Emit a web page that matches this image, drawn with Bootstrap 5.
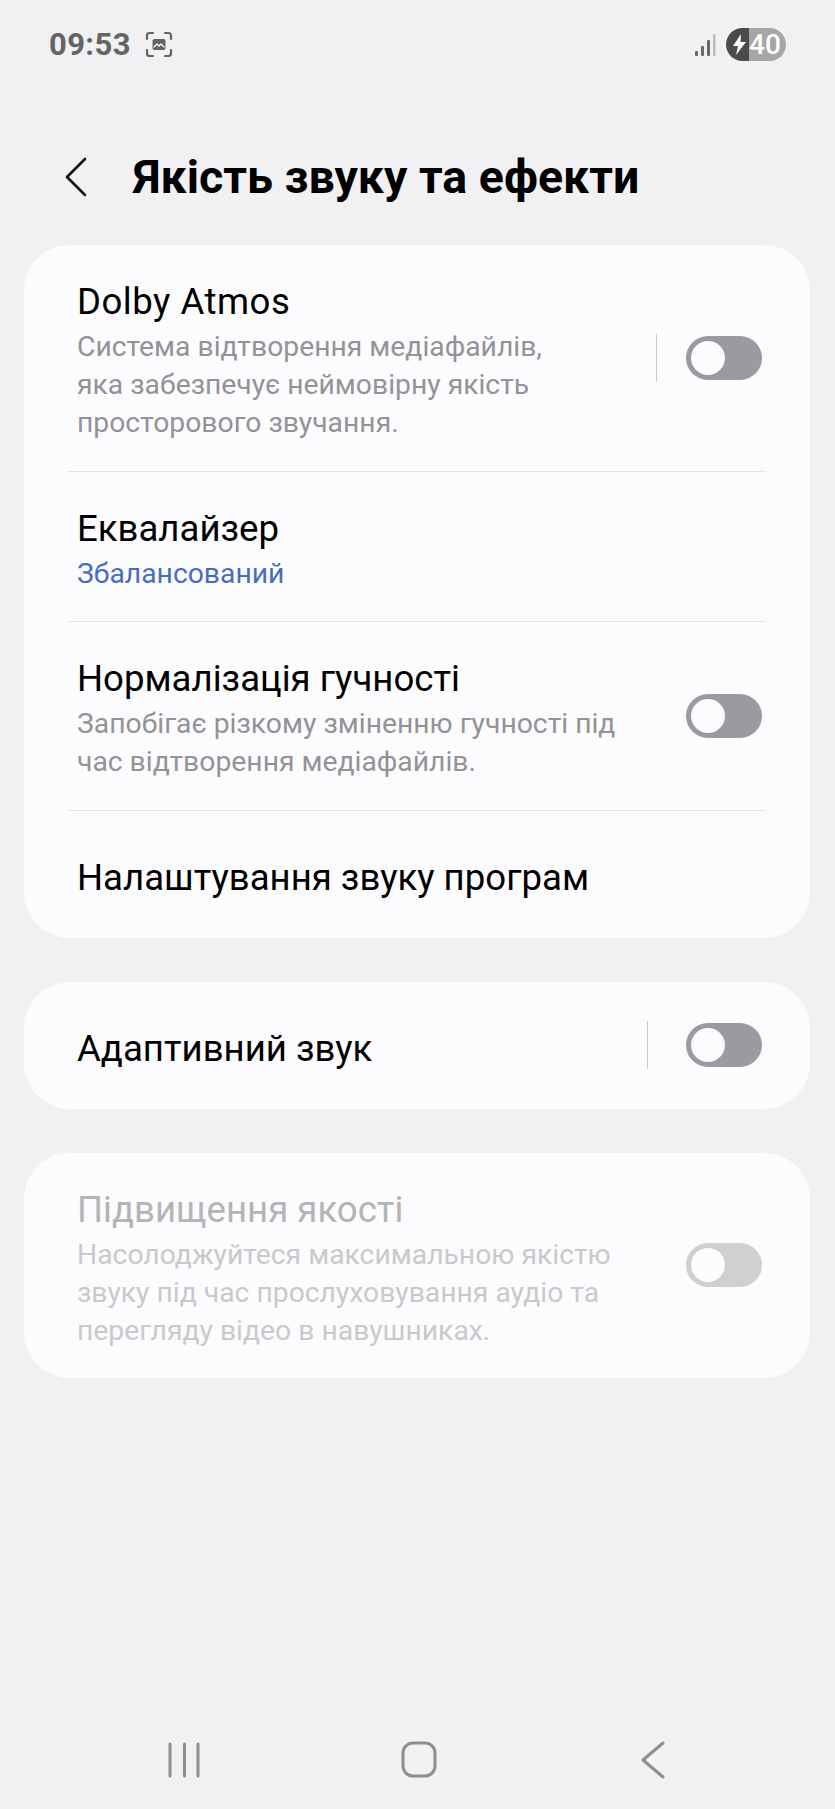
<!DOCTYPE html>
<html lang="uk">
<head>
  <meta charset="UTF-8">
  <meta name="viewport" content="width=device-width, initial-scale=1">
  <title>Якість звуку та ефекти</title>
  <link href="https://cdn.jsdelivr.net/npm/bootstrap@5.3.0/dist/css/bootstrap.min.css" rel="stylesheet">
  <style>
    body { background: #f1f1f3; font-family: Roboto, "Liberation Sans", sans-serif; height: 1809px; overflow: hidden; }
    .status-bar { height: 76px; padding: 28px 49px 0 49px; }
    .status-left { gap: 14px; }
    .status-time { font-size: 31px; line-height: 33px; font-weight: 700; color: #646466; letter-spacing: .4px; }
    .status-right { gap: 10px; }
    .batt { width: 60px; height: 33px; border-radius: 17px; overflow: hidden; color: #fff; }
    .batt-dark { width: 23px; background: #4b4b4d; }
    .batt-light { width: 37px; background: #a6a6a8; font-size: 28px; line-height: 33px; font-weight: 500; padding-right: 5px; }
    .page-head { height: 169px; padding: 32px 0 0 65px; }
    .page-title { font-size: 46.5px; line-height: 56px; font-weight: 700; color: #000; margin: 0 0 0 46px; }
    .sound-card { background: #fcfcfe; border: 0; border-radius: 46px; margin: 0 25px 44px 24px; padding: 0 44px 0 43px; }
    .sound-item { background: transparent; padding: 6px 4px 0 10px; border-color: #e4e4e6; }
    .h-dolby { height: 227px; }
    .h-eq { height: 150px; }
    .h-norm { height: 189px; }
    .h-apps { height: 127px; }
    .h-adapt { height: 127px; }
    .h-quality { height: 225px; }
    .item-title { font-size: 36.6px; line-height: 44px; color: #000; }
    .title-latin { letter-spacing: .5px; }
    .item-sub { font-size: 28.3px; line-height: 38px; color: #939397; margin-top: 4px; }
    .item-blue { color: #4a6cc0; }
    .off .item-title { color: #b4b4b6; }
    .off .item-sub { color: #c9c9cc; }
    .sw-track { width: 76px; height: 44px; border-radius: 22px; background: #9b9b9f; padding: 5px; flex: none; }
    .sw-knob { width: 34px; height: 34px; border-radius: 50%; background: #fcfcfe; }
    .off .sw-track { background: #d0d0d3; }
    .sw-box { margin-top: -7px; }
    .sw-sep { width: 1px; height: 48px; background: #c9c9cb; flex: none; margin-top: -7px; }
    .sep-wide { margin-right: 29px; }
    .sep-adapt { margin-right: 38px; }
    .bottom-nav { height: 66px; margin-top: auto; margin-bottom: 15px; }
  </style>
</head>
<body class="d-flex flex-column">

  <!-- статус -->
  <div class="status-bar d-flex justify-content-between align-items-start">
    <div class="d-flex align-items-center status-left">
      <span class="status-time">09:53</span>
      <svg width="28" height="27" viewBox="0 0 28 27" fill="none" stroke="#646466" stroke-width="2.2" stroke-linecap="round" stroke-linejoin="round">
        <path d="M2 8V4.500Q2 2 4.500 2H8M20 2h3.500Q26 2 26 4.500V8M26 19v3.500Q26 25 23.500 25H20M8 25H4.500Q2 25 2 22.500V19"/>
        <rect x="7.500" y="8" width="13" height="11" rx="2" fill="#646466" stroke="none"/>
        <path d="M9 16l3-3 2 2 2-2 3 3" stroke="#fcfcfe" stroke-width="1.200"/>
      </svg>
    </div>
    <div class="d-flex align-items-center status-right">
      <svg width="22" height="24" viewBox="0 0 22 24">
        <rect x="1" y="18" width="3" height="5" rx="1" fill="#68686a"/>
        <rect x="7" y="13" width="3" height="10" rx="1" fill="#68686a"/>
        <rect x="13" y="7" width="3" height="16" rx="1" fill="#68686a"/>
        <rect x="19" y="1" width="2.500" height="22" rx="1" fill="#bcbcbe"/>
      </svg>
      <div class="batt d-flex">
        <div class="batt-dark d-flex align-items-center justify-content-end">
          <svg width="19" height="23" viewBox="0 0 19 23"><path d="M11 1L3 13h5l-2 9L16 9h-5.500z" fill="#fff"/></svg>
        </div>
        <div class="batt-light text-center">40</div>
      </div>
    </div>
  </div>

  <!-- заголовок -->
  <div class="page-head d-flex align-items-center">
    <svg width="22" height="40" viewBox="0 0 22 40" fill="none" stroke="#111" stroke-width="2.600" stroke-linecap="round" stroke-linejoin="round">
      <path d="M20 2L2 20l18 18"/>
    </svg>
    <h1 class="page-title">Якість звуку та ефекти</h1>
  </div>

  <div class="card sound-card">
    <div class="list-group list-group-flush">
      <div class="list-group-item sound-item h-dolby d-flex align-items-center">
        <div class="flex-grow-1">
          <div class="item-title title-latin">Dolby Atmos</div>
          <div class="item-sub">Система відтворення медіафайлів,<br>яка забезпечує неймовірну якість<br>просторового звучання.</div>
        </div>
        <div class="sw-sep sep-wide"></div>
        <div class="sw-track sw-box"><div class="sw-knob"></div></div>
      </div>
      <div class="list-group-item sound-item h-eq d-flex flex-column justify-content-center">
        <div class="item-title">Еквалайзер</div>
        <div class="item-sub item-blue">Збалансований</div>
      </div>
      <div class="list-group-item sound-item h-norm d-flex align-items-center">
        <div class="flex-grow-1">
          <div class="item-title">Нормалізація гучності</div>
          <div class="item-sub">Запобігає різкому зміненню гучності під<br>час відтворення медіафайлів.</div>
        </div>
        <div class="sw-track sw-box"><div class="sw-knob"></div></div>
      </div>
      <div class="list-group-item sound-item h-apps d-flex align-items-center">
        <div class="item-title">Налаштування звуку програм</div>
      </div>
    </div>
  </div>

  <div class="card sound-card">
    <div class="sound-item h-adapt d-flex align-items-center">
      <div class="item-title flex-grow-1">Адаптивний звук</div>
      <div class="sw-sep sep-adapt"></div>
      <div class="sw-track sw-box"><div class="sw-knob"></div></div>
    </div>
  </div>

  <div class="card sound-card off">
    <div class="sound-item h-quality d-flex align-items-center">
      <div class="flex-grow-1">
        <div class="item-title">Підвищення якості</div>
        <div class="item-sub">Насолоджуйтеся максимальною якістю<br>звуку під час прослуховування аудіо та<br>перегляду відео в навушниках.</div>
      </div>
      <div class="sw-track sw-box"><div class="sw-knob"></div></div>
    </div>
  </div>

  <!-- нижня панель -->
  <div class="bottom-nav">
    <svg width="835" height="66" viewBox="0 0 835 66" fill="none" stroke="#8e8e90" stroke-width="3" stroke-linecap="round" stroke-linejoin="round" class="d-block">
      <path d="M170 16v32M184.500 16v32M198 16v32"/>
      <rect x="403" y="15" width="32" height="33" rx="10"/>
      <path d="M663 15L643 32l20 17"/>
    </svg>
  </div>

<script src="https://cdn.jsdelivr.net/npm/bootstrap@5.3.0/dist/js/bootstrap.bundle.min.js"></script>
</body>
</html>
